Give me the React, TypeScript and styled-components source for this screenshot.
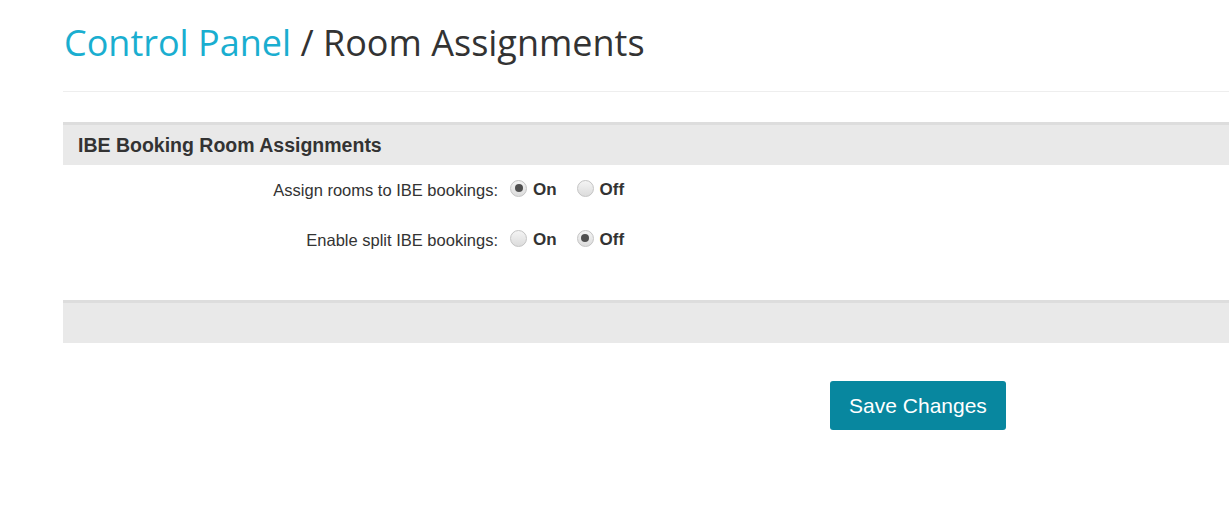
import styled, { createGlobalStyle } from 'styled-components';

const GlobalStyle = createGlobalStyle`
  html, body {
    margin: 0;
    padding: 0;
    background: #fff;
  }
  body {
    font-family: 'Liberation Sans', Arial, sans-serif;
    color: #333;
  }
`;

const Page = styled.div`
  padding-left: 63px;
  overflow: hidden;
`;

const PageTitle = styled.h1`
  margin: 0;
  padding: 19px 0 0 1px;
  height: 91px;
  box-sizing: border-box;
  font-family: 'Open Sans', sans-serif;
  font-weight: 400;
  font-size: 36px;
  line-height: 48px;
  color: #333;
  white-space: nowrap;
`;

const Crumb = styled.span`
  color: #1aaed0;
`;

const Rule = styled.hr`
  margin: 0;
  border: 0;
  border-top: 1px solid #eeeeee;
`;

const Panel = styled.section`
  margin-top: 30px;
  border-top: 3px solid #dddddd;
`;

const PanelHeader = styled.div`
  height: 40px;
  display: flex;
  align-items: center;
  padding-left: 15px;
  background: #e9e9e9;
  font-size: 19.5px;
  font-weight: 700;
  color: #333;
`;

const PanelBody = styled.div`
  display: flex;
  flex-direction: column;
  gap: 20px;
  padding: 10px 0 45px;
`;

const Row = styled.div`
  height: 30px;
  display: flex;
  align-items: center;
`;

const Label = styled.div`
  width: 435px;
  text-align: right;
  font-size: 16.5px;
  color: #333;
  padding-right: 12px;
`;

const Option = styled.label`
  display: flex;
  align-items: center;
  gap: 6px;
  margin-right: 20px;
  font-size: 17px;
  font-weight: 700;
  color: #333;
`;

const Radio = styled.span<{ checked: boolean }>`
  width: 17px;
  height: 17px;
  margin-top: -4px;
  box-sizing: border-box;
  border-radius: 50%;
  border: 1px solid #c4c4c4;
  background: linear-gradient(#f4f4f4, #dcdcdc);
  display: flex;
  align-items: center;
  justify-content: center;

  &::after {
    content: '';
    width: 8px;
    height: 8px;
    border-radius: 50%;
    background: #4f4f4f;
    display: ${props => (props.checked ? 'block' : 'none')};
  }
`;

const PanelFooter = styled.div`
  height: 40px;
  background: #e9e9e9;
  border-top: 3px solid #dddddd;
`;

const Actions = styled.div`
  padding: 38px 0 0 767px;
`;

const SaveButton = styled.button`
  width: 176px;
  height: 49px;
  border: 0;
  border-radius: 3px;
  background: #08879f;
  color: #fff;
  font-family: 'Liberation Sans', Arial, sans-serif;
  font-size: 21px;
  cursor: pointer;
`;

const rows = [
  { label: 'Assign rooms to IBE bookings:', on: true },
  { label: 'Enable split IBE bookings:', on: false },
];

export default function App() {
  return (
    <>
      <GlobalStyle />
      <Page>
        <PageTitle>
          <Crumb>Control Panel</Crumb> / Room Assignments
        </PageTitle>
        <Rule />
        <Panel>
          <PanelHeader>IBE Booking Room Assignments</PanelHeader>
          <PanelBody>
            {rows.map(row => (
              <Row key={row.label}>
                <Label>{row.label}</Label>
                <Option>
                  <Radio checked={row.on} />
                  On
                </Option>
                <Option>
                  <Radio checked={!row.on} />
                  Off
                </Option>
              </Row>
            ))}
          </PanelBody>
          <PanelFooter />
        </Panel>
        <Actions>
          <SaveButton>Save Changes</SaveButton>
        </Actions>
      </Page>
    </>
  );
}
